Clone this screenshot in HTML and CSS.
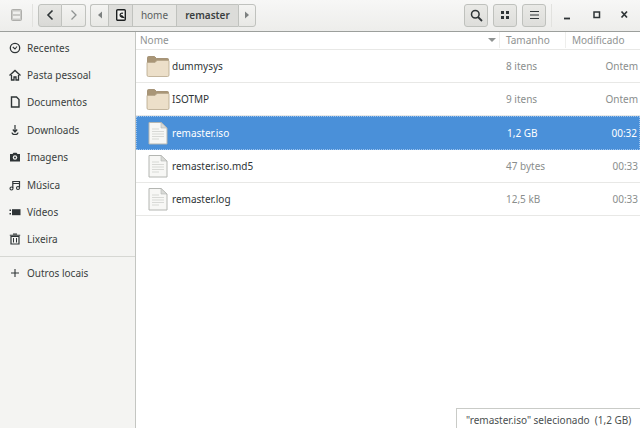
FILE: index.html
```html
<!DOCTYPE html>
<html lang="pt">
<head>
<meta charset="utf-8">
<title>remaster</title>
<link rel="stylesheet" href="styles.css">
</head>
<body>
<div class="window">
  <header class="toolbar">
    <div class="app-icon">
      <svg width="11" height="12" viewBox="0 0 11 12"><rect x="0.500" y="0.500" width="10" height="11" rx="1" fill="#c9c9c6" stroke="#aeaeab"/><rect x="2" y="2.500" width="7" height="2.500" fill="#efefed"/><rect x="2" y="7" width="7" height="2.500" fill="#efefed"/></svg>
    </div>
    <div class="vsep first"></div>
    <div class="group nav">
      <button class="btn nav-btn"><svg width="10" height="12" viewBox="0 0 10 12"><path d="M7.500 1.500 3 6l4.500 4.500" fill="none" stroke="#2e3436" stroke-width="1.600"/></svg></button>
      <button class="btn nav-btn"><svg width="10" height="12" viewBox="0 0 10 12"><path d="M2.500 1.500 7 6l-4.500 4.500" fill="none" stroke="#8f9392" stroke-width="1.300"/></svg></button>
    </div>
    <div class="group path">
      <button class="btn arrow"><svg width="6" height="8" viewBox="0 0 6 8"><path d="M5 0.500v7L1 4z" fill="#7d8180"/></svg></button>
      <button class="btn crumb disk"><svg width="10" height="12" viewBox="0 0 10 12"><rect x="0.700" y="0.700" width="8.600" height="10.600" rx="1" fill="#f3f3f1" stroke="#1c1f20" stroke-width="1.400"/><path d="M7 4.300A2 2 0 1 0 5.500 8L7.300 8.300 5.300 6.300" fill="none" stroke="#1c1f20" stroke-width="1.300"/></svg></button>
      <button class="btn crumb home">home</button>
      <button class="btn crumb current">remaster</button>
      <button class="btn arrow"><svg width="6" height="8" viewBox="0 0 6 8"><path d="M1 0.500v7L5 4z" fill="#7d8180"/></svg></button>
    </div>
    <div class="spacer"></div>
    <div class="actions">
      <button class="btn tool"><svg width="13" height="13" viewBox="0 0 13 13"><circle cx="5.300" cy="5.300" r="3.800" fill="none" stroke="#2e3436" stroke-width="1.500"/><path d="m8 8 4 4" stroke="#2e3436" stroke-width="1.800"/></svg></button>
      <button class="btn tool"><svg width="10" height="10" viewBox="0 0 10 10"><path d="M1 1h3v3H1zM6 1h3v3H6zM1 6h3v3H1zM6 6h3v3H6z" fill="#2e3436"/></svg></button>
      <button class="btn tool"><svg width="11" height="10" viewBox="0 0 11 10"><path d="M1 1.500h9M1 5h9M1 8.500h9" stroke="#2e3436" stroke-width="1.200"/></svg></button>
    </div>
    <div class="vsep last"></div>
    <div class="wm">
      <svg class="wm-icon" width="10" height="10" viewBox="0 0 10 10"><path d="M1 8.500h6" stroke="#2e3436" stroke-width="1.800"/></svg>
      <svg class="wm-icon" width="10" height="10" viewBox="0 0 10 10"><rect x="2" y="2" width="5.500" height="5.500" fill="none" stroke="#2e3436" stroke-width="1.500"/></svg>
      <svg class="wm-icon" width="10" height="10" viewBox="0 0 10 10"><path d="m1.500 1.500 5.500 6m0-6-5.500 6" stroke="#2e3436" stroke-width="1.700"/></svg>
    </div>
  </header>
  <div class="body">
    <nav class="sidebar">
      <a class="place"><svg width="12" height="12" viewBox="0 0 12 12"><circle cx="6" cy="6" r="4.700" fill="none" stroke="#2e3436" stroke-width="1.300"/><path d="M3.800 5 6 7l2-2.500" fill="none" stroke="#2e3436" stroke-width="1.100"/></svg><span>Recentes</span></a>
      <a class="place"><svg width="12" height="12" viewBox="0 0 12 12"><path d="M0.500 6.500 6 1.500l5.500 5" fill="none" stroke="#2e3436" stroke-width="1.400"/><path d="M2.500 6v5h2.500V8h2v3h2.500V6" fill="none" stroke="#2e3436" stroke-width="1.300"/></svg><span>Pasta pessoal</span></a>
      <a class="place"><svg width="12" height="12" viewBox="0 0 12 12"><path d="M2.500 1h5l2.500 2.500V11H2.500z" fill="none" stroke="#2e3436" stroke-width="1.400"/></svg><span>Documentos</span></a>
      <a class="place"><svg width="12" height="12" viewBox="0 0 12 12"><path d="M6 1v6.500M3.800 5.500 6 8l2.200-2.500" fill="none" stroke="#2e3436" stroke-width="1.200"/><path d="M3 8.500q0 2 3 2t3-2" fill="none" stroke="#2e3436" stroke-width="1.100"/></svg><span>Downloads</span></a>
      <a class="place"><svg width="12" height="12" viewBox="0 0 12 12"><path d="M1 3h2.500l1-1.200h3L8.500 3H11v7.500H1z" fill="#2e3436"/><circle cx="6" cy="6.500" r="2.200" fill="#f3f3f1"/><circle cx="6" cy="6.500" r="1" fill="#2e3436"/></svg><span>Imagens</span></a>
      <a class="place"><svg width="12" height="12" viewBox="0 0 12 12"><path d="M3.800 9V2.500H10.500V8.500M3.800 4.500h6.700" fill="none" stroke="#2e3436" stroke-width="1.200"/><circle cx="2.500" cy="9.500" r="1.500" fill="none" stroke="#2e3436" stroke-width="1.100"/><circle cx="9" cy="9" r="1.500" fill="none" stroke="#2e3436" stroke-width="1.100"/></svg><span>Música</span></a>
      <a class="place"><svg width="12" height="12" viewBox="0 0 12 12"><path d="M3 3.200h8.500v6H3z" fill="#2e3436"/><path d="M0.500 3.500h1.500v1.500H0.500zM0.500 7h1.500v1.500H0.500z" fill="#2e3436"/></svg><span>Vídeos</span></a>
      <a class="place"><svg width="12" height="12" viewBox="0 0 12 12"><path d="M2 3.500h8V11H2z" fill="none" stroke="#2e3436" stroke-width="1.200"/><path d="M0.800 2.200h10.400M4 1h4" stroke="#2e3436" stroke-width="1.100"/><path d="M4.500 5v4.500M7.500 5v4.500" stroke="#2e3436"/></svg><span>Lixeira</span></a>
      <div class="divider"></div>
      <a class="place"><svg width="12" height="12" viewBox="0 0 12 12"><path d="M6 2v8M2 6h8" stroke="#2e3436" stroke-width="1.100"/></svg><span>Outros locais</span></a>
    </nav>
    <main class="content">
      <div class="columns">
        <div class="col col-name">Nome<svg width="8" height="4" viewBox="0 0 8 4"><path d="M0 0h8L4 4z" fill="#8f9392"/></svg></div>
        <div class="col col-size">Tamanho</div>
        <div class="col col-date">Modificado</div>
      </div>
      <div class="row">
        <div class="cell-name"><svg class="icon" width="24" height="24" viewBox="0 0 24 24"><use href="#folder"/></svg>dummysys</div>
        <div class="cell-size">8 itens</div><div class="cell-date">Ontem</div>
      </div>
      <div class="row">
        <div class="cell-name"><svg class="icon" width="24" height="24" viewBox="0 0 24 24"><use href="#folder"/></svg>ISOTMP</div>
        <div class="cell-size">9 itens</div><div class="cell-date">Ontem</div>
      </div>
      <div class="row selected">
        <div class="cell-name"><svg class="icon" width="24" height="24" viewBox="0 0 24 24"><use href="#file"/></svg>remaster.iso</div>
        <div class="cell-size">1,2 GB</div><div class="cell-date">00:32</div>
      </div>
      <div class="row">
        <div class="cell-name"><svg class="icon" width="24" height="24" viewBox="0 0 24 24"><use href="#file"/></svg>remaster.iso.md5</div>
        <div class="cell-size">47 bytes</div><div class="cell-date">00:33</div>
      </div>
      <div class="row">
        <div class="cell-name"><svg class="icon" width="24" height="24" viewBox="0 0 24 24"><use href="#file"/></svg>remaster.log</div>
        <div class="cell-size">12,5 kB</div><div class="cell-date">00:33</div>
      </div>
      <div class="status">"remaster.iso" selecionado&nbsp; (1,2 GB)</div>
    </main>
  </div>
</div>
<svg class="defs" width="0" height="0">
  <defs>
    <g id="folder">
      <path d="M1.500 20.500V3.500q0-1 1-1h6l2 2h11q1 0 1 1v3h-21z" fill="#a99677" stroke="#9a8767" stroke-width="0.800"/>
      <path d="M1 8.500h8l2-2h11.500q.5 0 .5.500v14q0 1.500-1.500 1.500h-19Q1 22.500 1 21z" fill="#ecdfc9" stroke="#b6a68a" stroke-width="0.800"/>
    </g>
    <g id="file">
      <path d="M3 1.500h12l6 5.500v16h-18z" fill="#f7f7f5" stroke="#b4b6b2"/>
      <path d="M15 1.500v5.500h6z" fill="#d9dad7" stroke="#b4b6b2" stroke-width="0.600"/>
      <path d="M6 8h7M6 10.500h12M6 13h12M6 15.500h12M6 18h7" stroke="#d8d9d6" stroke-width="1.100"/>
    </g>
  </defs>
</svg>
</body>
</html>
```
FILE: styles.css
```css
* { box-sizing: border-box; }
html, body { margin: 0; padding: 0; }
body { width: 640px; height: 428px; overflow: hidden; background: #fff; font-family: "Noto Sans", sans-serif; font-size: 10px; color: #2e3436; }
.window { display: flex; flex-direction: column; height: 428px; }
.defs { position: absolute; }

.toolbar { display: flex; align-items: center; height: 32px; flex: none; background: linear-gradient(#f7f7f6, #ededeb); border-bottom: 1px solid #9c9f9c; padding-bottom: 1px; }
.app-icon { width: 32px; display: flex; justify-content: center; }
.app-icon svg { display: block; }
.vsep { width: 1px; height: 23px; background: #e2e2df; }
.vsep.first { margin-right: 5px; }
.vsep.last { margin-left: 5px; }
.group { display: flex; height: 23px; }
.btn { display: flex; align-items: center; justify-content: center; height: 23px; padding: 0; margin: 0; font: inherit; color: #5a5f60; border: 1px solid #c0c2be; background: linear-gradient(#f4f4f2, #e8e8e5); }
.nav .nav-btn { width: 24px; }
.nav .nav-btn:first-child { border-radius: 3px 0 0 3px; background: linear-gradient(#e6e6e3, #d9d9d6); }
.nav .nav-btn:last-child { border-left: 0; border-radius: 0 3px 3px 0; }
.path { margin-left: 4px; }
.arrow { width: 18px; }
.path .arrow:first-child { border-radius: 3px 0 0 3px; border-right: 0; }
.path .arrow:last-child { border-radius: 0 3px 3px 0; border-left: 1px solid #c0c2be; }
.crumb { background: #e7e7e4; border-right: 0; }
.disk { width: 24px; background: #dededb; }
.home { width: 44px; }
.current { width: 62px; background: #dcdcd9; font-weight: 600; color: #3a3f40; }
.spacer { flex: 1; }
.actions { display: flex; gap: 5px; }
.tool { width: 24px; border-radius: 3px; border-color: #bfc1bd; background: linear-gradient(#e9e9e6, #dededb); }
.wm { display: flex; width: 88px; gap: 18.500px; padding-left: 11px; }
.wm-icon { display: block; flex: none; }

.body { display: flex; flex: 1; min-height: 0; }
.sidebar { width: 136px; flex: none; background: #f4f4f2; border-right: 1px solid #c4c6c2; padding-top: 2px; }
.place { display: flex; align-items: center; height: 27.400px; padding-left: 9px; gap: 6px; color: #3a3f40; }
.place svg { flex: none; }
.divider { height: 1px; background: #d6d7d3; margin: 3px 0 2px; }

.content { flex: 1; position: relative; min-width: 0; }
.columns { display: flex; height: 18px; color: #8f9392; border-bottom: 1px solid #e8e8e6; padding-bottom: 1px; }
.col { display: flex; align-items: center; padding-left: 6px; border-right: 1px solid #eeeeec; }
.col-name { width: 364px; padding-left: 4px; justify-content: space-between; padding-right: 3px; }
.col-size { width: 66px; }
.col-date { flex: 1; border-right: 0; white-space: nowrap; overflow: hidden; }
.row { display: flex; align-items: center; height: 33.200px; border-bottom: 1px solid #e8e8e6; }
.cell-name { width: 370px; display: flex; align-items: center; gap: 2px; padding-left: 10px; color: #2e3436; }
.icon { display: block; flex: none; }
.cell-size { width: 81px; color: #8a8e8d; }
.cell-date { flex: 1; text-align: right; padding-right: 2px; color: #8a8e8d; }
.selected { background: #4a90d9; border: 1px dotted #9cc3ee; }
.selected .cell-name, .selected .cell-size, .selected .cell-date { color: #fff; }
.selected .cell-name { padding-left: 9px; }
.status { position: absolute; right: 0; bottom: 0; width: 184px; height: 20px; padding: 4px 0 0 9px; background: #fff; border: 1px solid #c9cbc7; border-right: 0; border-bottom: 0; white-space: nowrap; color: #4a4f50; }
```
